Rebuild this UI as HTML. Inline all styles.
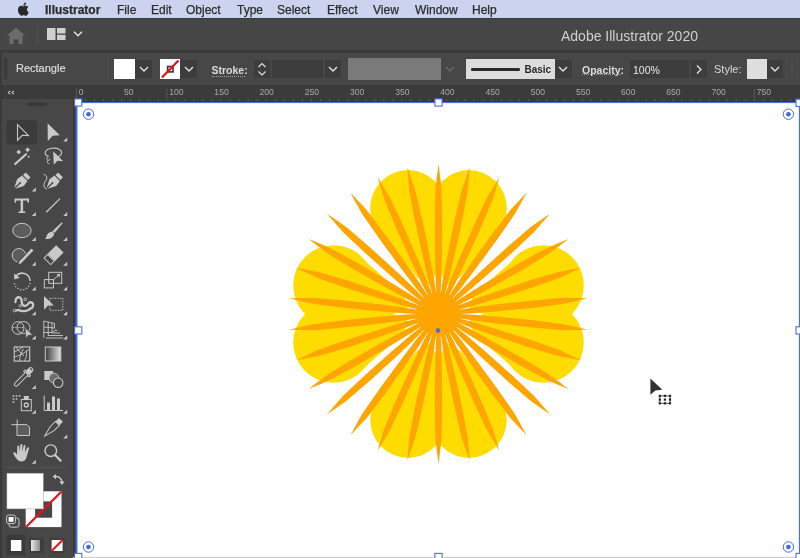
<!DOCTYPE html>
<html><head><meta charset="utf-8">
<style>
*{margin:0;padding:0;box-sizing:border-box}
html,body{width:800px;height:558px;overflow:hidden;will-change:transform;background:#3a3a3a;font-family:"Liberation Sans",sans-serif}
.a{position:absolute}
#menubar{left:0;top:0;width:800px;height:18px;background:#ccd3ee}
.mi{position:absolute;top:2.7px;font-size:12px;color:#2c2c2c;-webkit-text-stroke:0.25px #2c2c2c;line-height:15px;white-space:nowrap}
#appbar{left:0;top:18px;width:800px;height:32px;background:#464646;border-top:1px solid #383838}
#band{left:0;top:50px;width:800px;height:3px;background:#3c3c3c}
#ctrl{left:0;top:53px;width:800px;height:32px;background:#474747}
#ruler{left:0;top:85px;width:800px;height:16px;background:#3b3b3b}
#tools{left:0;top:99px;width:73px;height:459px;background:#474747}
#canvas{left:73px;top:101px;width:727px;height:457px;background:#393939}
#artboard{left:77px;top:103px;width:722px;height:454px;background:#fff}
.t{position:absolute;white-space:nowrap;line-height:12px}
.dd{position:absolute;background:#3d3d3d}
svg{position:absolute;left:0;top:0}
</style></head><body>
<div id="menubar" class="a">
 <span class="mi" style="left:45px;font-weight:bold">Illustrator</span>
 <span class="mi" style="left:117px">File</span>
 <span class="mi" style="left:151px">Edit</span>
 <span class="mi" style="left:186px">Object</span>
 <span class="mi" style="left:237px">Type</span>
 <span class="mi" style="left:277px">Select</span>
 <span class="mi" style="left:327px">Effect</span>
 <span class="mi" style="left:373px">View</span>
 <span class="mi" style="left:415px">Window</span>
 <span class="mi" style="left:472px">Help</span>
</div>
<div id="appbar" class="a"></div>
<div id="band" class="a"></div>
<div id="ctrl" class="a"></div>
<div id="ruler" class="a"></div>
<div id="tools" class="a"></div>
<div class="a" style="left:0;top:53px;width:1.8px;height:505px;background:#3a3a3a"></div>
<div id="canvas" class="a"></div>
<div id="artboard" class="a"></div>

<!-- app bar title -->
<div class="t" style="left:561px;top:29px;font-size:14px;line-height:14px;color:#cfcfcf">Adobe Illustrator 2020</div>

<!-- control bar -->
<div class="t" style="left:16px;top:62.4px;font-size:11px;color:#dcdcdc;-webkit-text-stroke:0.2px #dcdcdc">Rectangle</div>
<div class="a" style="left:114px;top:59px;width:21px;height:20px;background:#fff"></div>
<div class="dd" style="left:135px;top:60px;width:17px;height:18px"></div>
<div class="a" style="left:160px;top:59px;width:20px;height:20px;background:#fff"></div>
<div class="dd" style="left:180px;top:60px;width:17px;height:18px"></div>
<div class="t" style="left:211.5px;top:63.5px;font-size:10.5px;font-weight:bold;color:#dcdcdc">Stroke:</div>
<div class="dd" style="left:254px;top:60px;width:16px;height:18px"></div>
<div class="dd" style="left:272px;top:60px;width:51px;height:18px"></div>
<div class="dd" style="left:325px;top:60px;width:16px;height:18px"></div>
<div class="a" style="left:348px;top:58px;width:93px;height:22px;background:#7a7a7a"></div>
<div class="a" style="left:466px;top:59px;width:89px;height:20px;background:#dcdcdc"></div>
<div class="t" style="left:524.5px;top:64px;font-size:10px;font-weight:bold;color:#2a2a2a">Basic</div>
<div class="dd" style="left:555px;top:60px;width:17px;height:18px"></div>
<div class="t" style="left:582px;top:63.5px;font-size:10.5px;font-weight:bold;color:#dcdcdc">Opacity:</div>
<div class="dd" style="left:630px;top:60px;width:59px;height:18px"></div>
<div class="t" style="left:633px;top:64px;font-size:10.5px;color:#e8e8e8">100%</div>
<div class="dd" style="left:691px;top:60px;width:16px;height:18px"></div>
<div class="t" style="left:714px;top:63px;font-size:11px;color:#d8d8d8">Style:</div>
<div class="a" style="left:747px;top:59px;width:20px;height:20px;background:#dededf"></div>
<div class="dd" style="left:767px;top:60px;width:16px;height:18px"></div>

<svg width="800" height="558" viewBox="0 0 800 558">

<!--FLOWER-->
<g fill="#ffdc00"><path d="M430.23,285.16 L416.35,276.66 L374.76,225.75 L445.79,205.38 L437.50,270.59 Z"/><circle cx="408.07" cy="207.88" r="37.8"/><path d="M446.77,285.16 L439.50,270.59 L431.21,205.38 L502.24,225.75 L460.65,276.66 Z"/><circle cx="468.93" cy="207.88" r="37.8"/><path d="M467.45,306.13 L476.15,292.37 L525.42,249.46 L546.13,325.69 L481.91,313.60 Z"/><circle cx="543.49" cy="285.47" r="40.3"/><path d="M467.45,321.87 L481.91,314.40 L546.13,302.31 L525.42,378.54 L476.15,335.63 Z"/><circle cx="543.49" cy="342.53" r="40.3"/><path d="M446.77,342.84 L460.65,351.34 L502.24,402.25 L431.21,422.62 L439.50,357.41 Z"/><circle cx="468.93" cy="420.12" r="37.8"/><path d="M430.23,342.84 L437.50,357.41 L445.79,422.62 L374.76,402.25 L416.35,351.34 Z"/><circle cx="408.07" cy="420.12" r="37.8"/><path d="M409.55,321.87 L400.85,335.63 L351.58,378.54 L330.87,302.31 L395.09,314.40 Z"/><circle cx="333.51" cy="342.53" r="40.3"/><path d="M409.55,306.13 L395.09,313.60 L330.87,325.69 L351.58,249.46 L400.85,292.37 Z"/><circle cx="333.51" cy="285.47" r="40.3"/></g>
<g fill="#ffa500"><path d="M437.70,314.00 L436.50,294.00 L435.60,279.00 L435.05,254.00 L434.80,219.00 L435.50,188.00 L436.90,176.50 L438.50,164.00 L440.10,176.50 L441.50,188.00 L442.20,219.00 L441.95,254.00 L441.40,279.00 L440.50,294.00 L439.30,314.00 Z"/><path d="M437.72,313.83 L440.70,294.02 L442.94,279.16 L447.60,254.59 L454.63,220.31 L461.76,190.13 L465.52,179.17 L469.69,167.28 L468.65,179.84 L467.63,191.38 L461.87,221.85 L454.35,256.03 L448.61,280.37 L444.61,294.85 L439.28,314.17 Z"/><path d="M437.77,313.67 L444.81,294.92 L450.09,280.85 L459.75,257.78 L473.76,225.71 L487.01,197.67 L492.96,187.74 L499.51,176.97 L495.89,189.04 L492.49,200.11 L480.52,228.72 L466.06,260.59 L455.39,283.21 L448.46,296.54 L439.23,314.33 Z"/><path d="M437.85,313.53 L448.64,296.64 L456.73,283.98 L470.98,263.43 L491.35,234.97 L510.13,210.30 L518.03,201.82 L526.67,192.65 L520.61,203.70 L514.99,213.83 L497.33,239.32 L476.56,267.49 L461.42,287.39 L451.87,299.00 L439.15,314.47 Z"/><path d="M437.96,313.41 L452.02,299.13 L462.57,288.43 L480.78,271.29 L506.62,247.68 L530.13,227.46 L539.61,220.81 L549.97,213.63 L541.75,223.18 L534.14,231.92 L511.57,253.18 L485.40,276.42 L466.45,292.74 L454.70,302.10 L439.04,314.59 Z"/><path d="M438.10,313.31 L454.82,302.27 L467.36,293.99 L488.74,281.01 L518.92,263.30 L546.12,248.40 L556.78,243.86 L568.40,239.00 L558.38,246.64 L549.12,253.60 L522.62,269.70 L492.19,286.99 L470.26,299.01 L456.82,305.73 L438.90,314.69 Z"/><path d="M438.25,313.24 L456.90,305.92 L470.89,300.43 L494.50,292.18 L527.71,281.12 L557.41,272.21 L568.78,269.99 L581.16,267.65 L569.76,273.03 L559.26,277.92 L529.99,288.16 L496.63,298.74 L472.68,305.94 L458.14,309.72 L438.75,314.76 Z"/><path d="M438.42,313.20 L458.18,309.92 L473.01,307.46 L497.81,304.30 L532.59,300.39 L563.50,297.85 L575.08,298.04 L587.68,298.32 L575.41,301.22 L564.12,303.81 L533.37,307.75 L498.53,311.16 L473.61,313.23 L458.60,313.90 L438.58,314.80 Z"/><path d="M438.58,313.20 L458.60,314.10 L473.61,314.77 L498.53,316.84 L533.37,320.25 L564.12,324.19 L575.41,326.78 L587.68,329.68 L575.08,329.96 L563.50,330.15 L532.59,327.61 L497.81,323.70 L473.01,320.54 L458.18,318.08 L438.42,314.80 Z"/><path d="M438.75,313.24 L458.14,318.28 L472.68,322.06 L496.63,329.26 L529.99,339.84 L559.26,350.08 L569.76,354.97 L581.16,360.35 L568.78,358.01 L557.41,355.79 L527.71,346.88 L494.50,335.82 L470.89,327.57 L456.90,322.08 L438.25,314.76 Z"/><path d="M438.90,313.31 L456.82,322.27 L470.26,328.99 L492.19,341.01 L522.62,358.30 L549.12,374.40 L558.38,381.36 L568.40,389.00 L556.78,384.14 L546.12,379.60 L518.92,364.70 L488.74,346.99 L467.36,334.01 L454.82,325.73 L438.10,314.69 Z"/><path d="M439.04,313.41 L454.70,325.90 L466.45,335.26 L485.40,351.58 L511.57,374.82 L534.14,396.08 L541.75,404.82 L549.97,414.37 L539.61,407.19 L530.13,400.54 L506.62,380.32 L480.78,356.71 L462.57,339.57 L452.02,328.87 L437.96,314.59 Z"/><path d="M439.15,313.53 L451.87,329.00 L461.42,340.61 L476.56,360.51 L497.33,388.68 L514.99,414.17 L520.61,424.30 L526.67,435.35 L518.03,426.18 L510.13,417.70 L491.35,393.03 L470.98,364.57 L456.73,344.02 L448.64,331.36 L437.85,314.47 Z"/><path d="M439.23,313.67 L448.46,331.46 L455.39,344.79 L466.06,367.41 L480.52,399.28 L492.49,427.89 L495.89,438.96 L499.51,451.03 L492.96,440.26 L487.01,430.33 L473.76,402.29 L459.75,370.22 L450.09,347.15 L444.81,333.08 L437.77,314.33 Z"/><path d="M439.28,313.83 L444.61,333.15 L448.61,347.63 L454.35,371.97 L461.87,406.15 L467.63,436.62 L468.65,448.16 L469.69,460.72 L465.52,448.83 L461.76,437.87 L454.63,407.69 L447.60,373.41 L442.94,348.84 L440.70,333.98 L437.72,314.17 Z"/><path d="M439.30,314.00 L440.50,334.00 L441.40,349.00 L441.95,374.00 L442.20,409.00 L441.50,440.00 L440.10,451.50 L438.50,464.00 L436.90,451.50 L435.50,440.00 L434.80,409.00 L435.05,374.00 L435.60,349.00 L436.50,334.00 L437.70,314.00 Z"/><path d="M439.28,314.17 L436.30,333.98 L434.06,348.84 L429.40,373.41 L422.37,407.69 L415.24,437.87 L411.48,448.83 L407.31,460.72 L408.35,448.16 L409.37,436.62 L415.13,406.15 L422.65,371.97 L428.39,347.63 L432.39,333.15 L437.72,313.83 Z"/><path d="M439.23,314.33 L432.19,333.08 L426.91,347.15 L417.25,370.22 L403.24,402.29 L389.99,430.33 L384.04,440.26 L377.49,451.03 L381.11,438.96 L384.51,427.89 L396.48,399.28 L410.94,367.41 L421.61,344.79 L428.54,331.46 L437.77,313.67 Z"/><path d="M439.15,314.47 L428.36,331.36 L420.27,344.02 L406.02,364.57 L385.65,393.03 L366.87,417.70 L358.97,426.18 L350.33,435.35 L356.39,424.30 L362.01,414.17 L379.67,388.68 L400.44,360.51 L415.58,340.61 L425.13,329.00 L437.85,313.53 Z"/><path d="M439.04,314.59 L424.98,328.87 L414.43,339.57 L396.22,356.71 L370.38,380.32 L346.87,400.54 L337.39,407.19 L327.03,414.37 L335.25,404.82 L342.86,396.08 L365.43,374.82 L391.60,351.58 L410.55,335.26 L422.30,325.90 L437.96,313.41 Z"/><path d="M438.90,314.69 L422.18,325.73 L409.64,334.01 L388.26,346.99 L358.08,364.70 L330.88,379.60 L320.22,384.14 L308.60,389.00 L318.62,381.36 L327.88,374.40 L354.38,358.30 L384.81,341.01 L406.74,328.99 L420.18,322.27 L438.10,313.31 Z"/><path d="M438.75,314.76 L420.10,322.08 L406.11,327.57 L382.50,335.82 L349.29,346.88 L319.59,355.79 L308.22,358.01 L295.84,360.35 L307.24,354.97 L317.74,350.08 L347.01,339.84 L380.37,329.26 L404.32,322.06 L418.86,318.28 L438.25,313.24 Z"/><path d="M438.58,314.80 L418.82,318.08 L403.99,320.54 L379.19,323.70 L344.41,327.61 L313.50,330.15 L301.92,329.96 L289.32,329.68 L301.59,326.78 L312.88,324.19 L343.63,320.25 L378.47,316.84 L403.39,314.77 L418.40,314.10 L438.42,313.20 Z"/><path d="M438.42,314.80 L418.40,313.90 L403.39,313.23 L378.47,311.16 L343.63,307.75 L312.88,303.81 L301.59,301.22 L289.32,298.32 L301.92,298.04 L313.50,297.85 L344.41,300.39 L379.19,304.30 L403.99,307.46 L418.82,309.92 L438.58,313.20 Z"/><path d="M438.25,314.76 L418.86,309.72 L404.32,305.94 L380.37,298.74 L347.01,288.16 L317.74,277.92 L307.24,273.03 L295.84,267.65 L308.22,269.99 L319.59,272.21 L349.29,281.12 L382.50,292.18 L406.11,300.43 L420.10,305.92 L438.75,313.24 Z"/><path d="M438.10,314.69 L420.18,305.73 L406.74,299.01 L384.81,286.99 L354.38,269.70 L327.88,253.60 L318.62,246.64 L308.60,239.00 L320.22,243.86 L330.88,248.40 L358.08,263.30 L388.26,281.01 L409.64,293.99 L422.18,302.27 L438.90,313.31 Z"/><path d="M437.96,314.59 L422.30,302.10 L410.55,292.74 L391.60,276.42 L365.43,253.18 L342.86,231.92 L335.25,223.18 L327.03,213.63 L337.39,220.81 L346.87,227.46 L370.38,247.68 L396.22,271.29 L414.43,288.43 L424.98,299.13 L439.04,313.41 Z"/><path d="M437.85,314.47 L425.13,299.00 L415.58,287.39 L400.44,267.49 L379.67,239.32 L362.01,213.83 L356.39,203.70 L350.33,192.65 L358.97,201.82 L366.87,210.30 L385.65,234.97 L406.02,263.43 L420.27,283.98 L428.36,296.64 L439.15,313.53 Z"/><path d="M437.77,314.33 L428.54,296.54 L421.61,283.21 L410.94,260.59 L396.48,228.72 L384.51,200.11 L381.11,189.04 L377.49,176.97 L384.04,187.74 L389.99,197.67 L403.24,225.71 L417.25,257.78 L426.91,280.85 L432.19,294.92 L439.23,313.67 Z"/><path d="M437.72,314.17 L432.39,294.85 L428.39,280.37 L422.65,256.03 L415.13,221.85 L409.37,191.38 L408.35,179.84 L407.31,167.28 L411.48,179.17 L415.24,190.13 L422.37,220.31 L429.40,254.59 L434.06,279.16 L436.30,294.02 L439.28,313.83 Z"/><circle cx="438.5" cy="314.0" r="22"/></g>
<!--/FLOWER-->
<circle cx="438" cy="330.5" r="2.2" fill="#3b6fe0"/>
<!--CHROME-->
<path fill="#2a2a2a" transform="translate(1.6,0) scale(1.0)" d="M25.3,9.6c0-1.6,1.3-2.4,1.4-2.5c-0.8-1.1-2-1.3-2.4-1.3c-1-0.1-2,0.6-2.5,0.6c-0.5,0-1.3-0.6-2.2-0.6c-1.1,0-2.1,0.7-2.7,1.7c-1.2,2-0.3,5,0.8,6.6c0.6,0.8,1.2,1.7,2.1,1.7c0.8,0,1.2-0.5,2.2-0.5c1,0,1.3,0.5,2.2,0.5c0.9,0,1.5-0.8,2-1.6c0.6-0.9,0.9-1.8,0.9-1.9C27.1,12.3,25.3,11.6,25.3,9.6z M23.7,4.8c0.5-0.6,0.8-1.4,0.7-2.2c-0.7,0-1.5,0.5-2,1.1c-0.4,0.5-0.8,1.3-0.7,2.1C22.5,5.9,23.2,5.4,23.7,4.8z"/>
<path fill="#6b6b6b" d="M16,27.5 L25,35.5 L22.6,35.5 L22.6,44 L18.4,44 L18.4,39.5 L13.6,39.5 L13.6,44 L9.4,44 L9.4,35.5 L7,35.5 Z"/>
<line x1="37.5" y1="26" x2="37.5" y2="45" stroke="#5a5a5a" stroke-width="1" stroke-dasharray="1,1.5"/>
<rect x="47" y="28" width="8.5" height="12" fill="#cfcfcf"/><rect x="57" y="28" width="8.5" height="5.5" fill="#cfcfcf"/><rect x="57" y="34.8" width="8.5" height="5.2" fill="#cfcfcf"/>
<polyline points="74.0,31.8 78.0,35.8 82.0,31.8" fill="none" stroke="#e6e6e6" stroke-width="1.3"/>
<rect x="4" y="57.5" width="3.5" height="22" rx="1.5" fill="#3a3a3a"/>
<line x1="108" y1="57" x2="108" y2="81" stroke="#5a5a5a" stroke-dasharray="1,1.5"/>
<line x1="792" y1="57" x2="792" y2="81" stroke="#5a5a5a" stroke-dasharray="1,1.5"/>
<polyline points="140.0,67.0 144.0,71.0 148.0,67.0" fill="none" stroke="#e6e6e6" stroke-width="1.3"/>
<polyline points="185.0,67.0 189.0,71.0 193.0,67.0" fill="none" stroke="#e6e6e6" stroke-width="1.3"/>
<rect x="167.6" y="66.5" width="5.4" height="5.4" fill="none" stroke="#333" stroke-width="1.6"/>
<line x1="162" y1="77.5" x2="178.5" y2="60.5" stroke="#e8111a" stroke-width="2.2"/>
<line x1="212" y1="76.5" x2="246" y2="76.5" stroke="#9a9aa8" stroke-width="1" stroke-dasharray="1,1"/>
<polyline points="258.5,67 262,63.5 265.5,67" fill="none" stroke="#e0e0e0" stroke-width="1.2"/>
<polyline points="258.5,71.5 262,75 265.5,71.5" fill="none" stroke="#e0e0e0" stroke-width="1.2"/>
<polyline points="329.0,67.0 333.0,71.0 337.0,67.0" fill="none" stroke="#e6e6e6" stroke-width="1.3"/>
<polyline points="446.0,67.0 450.0,71.0 454.0,67.0" fill="none" stroke="#6a6a6a" stroke-width="1.3"/>
<rect x="471" y="68" width="49" height="3" rx="1.2" fill="#2a2a2a"/>
<polyline points="559.0,67.0 563.0,71.0 567.0,67.0" fill="none" stroke="#e6e6e6" stroke-width="1.3"/>
<line x1="582" y1="74.5" x2="622" y2="74.5" stroke="#9a9aa8" stroke-width="1" stroke-dasharray="1,1"/>
<polyline points="697,65.5 701,69.5 697,73.5" fill="none" stroke="#e6e6e6" stroke-width="1.3"/>
<polyline points="771.0,67.0 775.0,71.0 779.0,67.0" fill="none" stroke="#e6e6e6" stroke-width="1.3"/>
<polyline points="10.3,90.8 8.3,92.6 10.3,94.4" fill="none" stroke="#c0c0c0" stroke-width="1.1"/><polyline points="14,90.8 12,92.6 14,94.4" fill="none" stroke="#c0c0c0" stroke-width="1.1"/>
<line x1="76.50" y1="89" x2="76.50" y2="98" stroke="#5a5a5a" stroke-width="1"/>
<text x="78.80" y="95.3" font-size="8.6" fill="#a9a9a9" font-family="Liberation Sans">0</text>
<line x1="76.50" y1="99.5" x2="76.50" y2="101" stroke="#6a6a6a" stroke-width="1"/>
<line x1="85.54" y1="99.5" x2="85.54" y2="101" stroke="#6a6a6a" stroke-width="1"/>
<line x1="94.58" y1="99.5" x2="94.58" y2="101" stroke="#6a6a6a" stroke-width="1"/>
<line x1="103.61" y1="99.5" x2="103.61" y2="101" stroke="#6a6a6a" stroke-width="1"/>
<line x1="112.65" y1="99.5" x2="112.65" y2="101" stroke="#6a6a6a" stroke-width="1"/>
<text x="123.99" y="95.3" font-size="8.6" fill="#a9a9a9" font-family="Liberation Sans">50</text>
<line x1="121.69" y1="99.5" x2="121.69" y2="101" stroke="#6a6a6a" stroke-width="1"/>
<line x1="130.73" y1="99.5" x2="130.73" y2="101" stroke="#6a6a6a" stroke-width="1"/>
<line x1="139.77" y1="99.5" x2="139.77" y2="101" stroke="#6a6a6a" stroke-width="1"/>
<line x1="148.80" y1="99.5" x2="148.80" y2="101" stroke="#6a6a6a" stroke-width="1"/>
<line x1="157.84" y1="99.5" x2="157.84" y2="101" stroke="#6a6a6a" stroke-width="1"/>
<line x1="166.88" y1="89" x2="166.88" y2="98" stroke="#5a5a5a" stroke-width="1"/>
<text x="169.18" y="95.3" font-size="8.6" fill="#a9a9a9" font-family="Liberation Sans">100</text>
<line x1="166.88" y1="99.5" x2="166.88" y2="101" stroke="#6a6a6a" stroke-width="1"/>
<line x1="175.92" y1="99.5" x2="175.92" y2="101" stroke="#6a6a6a" stroke-width="1"/>
<line x1="184.96" y1="99.5" x2="184.96" y2="101" stroke="#6a6a6a" stroke-width="1"/>
<line x1="193.99" y1="99.5" x2="193.99" y2="101" stroke="#6a6a6a" stroke-width="1"/>
<line x1="203.03" y1="99.5" x2="203.03" y2="101" stroke="#6a6a6a" stroke-width="1"/>
<text x="214.37" y="95.3" font-size="8.6" fill="#a9a9a9" font-family="Liberation Sans">150</text>
<line x1="212.07" y1="99.5" x2="212.07" y2="101" stroke="#6a6a6a" stroke-width="1"/>
<line x1="221.11" y1="99.5" x2="221.11" y2="101" stroke="#6a6a6a" stroke-width="1"/>
<line x1="230.15" y1="99.5" x2="230.15" y2="101" stroke="#6a6a6a" stroke-width="1"/>
<line x1="239.18" y1="99.5" x2="239.18" y2="101" stroke="#6a6a6a" stroke-width="1"/>
<line x1="248.22" y1="99.5" x2="248.22" y2="101" stroke="#6a6a6a" stroke-width="1"/>
<text x="259.56" y="95.3" font-size="8.6" fill="#a9a9a9" font-family="Liberation Sans">200</text>
<line x1="257.26" y1="99.5" x2="257.26" y2="101" stroke="#6a6a6a" stroke-width="1"/>
<line x1="266.30" y1="99.5" x2="266.30" y2="101" stroke="#6a6a6a" stroke-width="1"/>
<line x1="275.34" y1="99.5" x2="275.34" y2="101" stroke="#6a6a6a" stroke-width="1"/>
<line x1="284.37" y1="99.5" x2="284.37" y2="101" stroke="#6a6a6a" stroke-width="1"/>
<line x1="293.41" y1="99.5" x2="293.41" y2="101" stroke="#6a6a6a" stroke-width="1"/>
<text x="304.75" y="95.3" font-size="8.6" fill="#a9a9a9" font-family="Liberation Sans">250</text>
<line x1="302.45" y1="99.5" x2="302.45" y2="101" stroke="#6a6a6a" stroke-width="1"/>
<line x1="311.49" y1="99.5" x2="311.49" y2="101" stroke="#6a6a6a" stroke-width="1"/>
<line x1="320.53" y1="99.5" x2="320.53" y2="101" stroke="#6a6a6a" stroke-width="1"/>
<line x1="329.56" y1="99.5" x2="329.56" y2="101" stroke="#6a6a6a" stroke-width="1"/>
<line x1="338.60" y1="99.5" x2="338.60" y2="101" stroke="#6a6a6a" stroke-width="1"/>
<text x="349.94" y="95.3" font-size="8.6" fill="#a9a9a9" font-family="Liberation Sans">300</text>
<line x1="347.64" y1="99.5" x2="347.64" y2="101" stroke="#6a6a6a" stroke-width="1"/>
<line x1="356.68" y1="99.5" x2="356.68" y2="101" stroke="#6a6a6a" stroke-width="1"/>
<line x1="365.72" y1="99.5" x2="365.72" y2="101" stroke="#6a6a6a" stroke-width="1"/>
<line x1="374.75" y1="99.5" x2="374.75" y2="101" stroke="#6a6a6a" stroke-width="1"/>
<line x1="383.79" y1="99.5" x2="383.79" y2="101" stroke="#6a6a6a" stroke-width="1"/>
<text x="395.13" y="95.3" font-size="8.6" fill="#a9a9a9" font-family="Liberation Sans">350</text>
<line x1="392.83" y1="99.5" x2="392.83" y2="101" stroke="#6a6a6a" stroke-width="1"/>
<line x1="401.87" y1="99.5" x2="401.87" y2="101" stroke="#6a6a6a" stroke-width="1"/>
<line x1="410.91" y1="99.5" x2="410.91" y2="101" stroke="#6a6a6a" stroke-width="1"/>
<line x1="419.94" y1="99.5" x2="419.94" y2="101" stroke="#6a6a6a" stroke-width="1"/>
<line x1="428.98" y1="99.5" x2="428.98" y2="101" stroke="#6a6a6a" stroke-width="1"/>
<text x="440.32" y="95.3" font-size="8.6" fill="#a9a9a9" font-family="Liberation Sans">400</text>
<line x1="438.02" y1="99.5" x2="438.02" y2="101" stroke="#6a6a6a" stroke-width="1"/>
<line x1="447.06" y1="99.5" x2="447.06" y2="101" stroke="#6a6a6a" stroke-width="1"/>
<line x1="456.10" y1="99.5" x2="456.10" y2="101" stroke="#6a6a6a" stroke-width="1"/>
<line x1="465.13" y1="99.5" x2="465.13" y2="101" stroke="#6a6a6a" stroke-width="1"/>
<line x1="474.17" y1="99.5" x2="474.17" y2="101" stroke="#6a6a6a" stroke-width="1"/>
<text x="485.51" y="95.3" font-size="8.6" fill="#a9a9a9" font-family="Liberation Sans">450</text>
<line x1="483.21" y1="99.5" x2="483.21" y2="101" stroke="#6a6a6a" stroke-width="1"/>
<line x1="492.25" y1="99.5" x2="492.25" y2="101" stroke="#6a6a6a" stroke-width="1"/>
<line x1="501.29" y1="99.5" x2="501.29" y2="101" stroke="#6a6a6a" stroke-width="1"/>
<line x1="510.32" y1="99.5" x2="510.32" y2="101" stroke="#6a6a6a" stroke-width="1"/>
<line x1="519.36" y1="99.5" x2="519.36" y2="101" stroke="#6a6a6a" stroke-width="1"/>
<text x="530.70" y="95.3" font-size="8.6" fill="#a9a9a9" font-family="Liberation Sans">500</text>
<line x1="528.40" y1="99.5" x2="528.40" y2="101" stroke="#6a6a6a" stroke-width="1"/>
<line x1="537.44" y1="99.5" x2="537.44" y2="101" stroke="#6a6a6a" stroke-width="1"/>
<line x1="546.48" y1="99.5" x2="546.48" y2="101" stroke="#6a6a6a" stroke-width="1"/>
<line x1="555.51" y1="99.5" x2="555.51" y2="101" stroke="#6a6a6a" stroke-width="1"/>
<line x1="564.55" y1="99.5" x2="564.55" y2="101" stroke="#6a6a6a" stroke-width="1"/>
<text x="575.89" y="95.3" font-size="8.6" fill="#a9a9a9" font-family="Liberation Sans">550</text>
<line x1="573.59" y1="99.5" x2="573.59" y2="101" stroke="#6a6a6a" stroke-width="1"/>
<line x1="582.63" y1="99.5" x2="582.63" y2="101" stroke="#6a6a6a" stroke-width="1"/>
<line x1="591.67" y1="99.5" x2="591.67" y2="101" stroke="#6a6a6a" stroke-width="1"/>
<line x1="600.70" y1="99.5" x2="600.70" y2="101" stroke="#6a6a6a" stroke-width="1"/>
<line x1="609.74" y1="99.5" x2="609.74" y2="101" stroke="#6a6a6a" stroke-width="1"/>
<text x="621.08" y="95.3" font-size="8.6" fill="#a9a9a9" font-family="Liberation Sans">600</text>
<line x1="618.78" y1="99.5" x2="618.78" y2="101" stroke="#6a6a6a" stroke-width="1"/>
<line x1="627.82" y1="99.5" x2="627.82" y2="101" stroke="#6a6a6a" stroke-width="1"/>
<line x1="636.86" y1="99.5" x2="636.86" y2="101" stroke="#6a6a6a" stroke-width="1"/>
<line x1="645.89" y1="99.5" x2="645.89" y2="101" stroke="#6a6a6a" stroke-width="1"/>
<line x1="654.93" y1="99.5" x2="654.93" y2="101" stroke="#6a6a6a" stroke-width="1"/>
<text x="666.27" y="95.3" font-size="8.6" fill="#a9a9a9" font-family="Liberation Sans">650</text>
<line x1="663.97" y1="99.5" x2="663.97" y2="101" stroke="#6a6a6a" stroke-width="1"/>
<line x1="673.01" y1="99.5" x2="673.01" y2="101" stroke="#6a6a6a" stroke-width="1"/>
<line x1="682.05" y1="99.5" x2="682.05" y2="101" stroke="#6a6a6a" stroke-width="1"/>
<line x1="691.08" y1="99.5" x2="691.08" y2="101" stroke="#6a6a6a" stroke-width="1"/>
<line x1="700.12" y1="99.5" x2="700.12" y2="101" stroke="#6a6a6a" stroke-width="1"/>
<text x="711.46" y="95.3" font-size="8.6" fill="#a9a9a9" font-family="Liberation Sans">700</text>
<line x1="709.16" y1="99.5" x2="709.16" y2="101" stroke="#6a6a6a" stroke-width="1"/>
<line x1="718.20" y1="99.5" x2="718.20" y2="101" stroke="#6a6a6a" stroke-width="1"/>
<line x1="727.24" y1="99.5" x2="727.24" y2="101" stroke="#6a6a6a" stroke-width="1"/>
<line x1="736.27" y1="99.5" x2="736.27" y2="101" stroke="#6a6a6a" stroke-width="1"/>
<line x1="745.31" y1="99.5" x2="745.31" y2="101" stroke="#6a6a6a" stroke-width="1"/>
<line x1="754.35" y1="89" x2="754.35" y2="98" stroke="#5a5a5a" stroke-width="1"/>
<text x="756.65" y="95.3" font-size="8.6" fill="#a9a9a9" font-family="Liberation Sans">750</text>
<line x1="754.35" y1="99.5" x2="754.35" y2="101" stroke="#6a6a6a" stroke-width="1"/>
<line x1="763.39" y1="99.5" x2="763.39" y2="101" stroke="#6a6a6a" stroke-width="1"/>
<line x1="772.43" y1="99.5" x2="772.43" y2="101" stroke="#6a6a6a" stroke-width="1"/>
<line x1="781.46" y1="99.5" x2="781.46" y2="101" stroke="#6a6a6a" stroke-width="1"/>
<line x1="790.50" y1="99.5" x2="790.50" y2="101" stroke="#6a6a6a" stroke-width="1"/>
<rect x="26.5" y="102.5" width="20.5" height="3.5" rx="1.7" fill="#393939"/>
<!--/CHROME-->
<!--TOOLS-->
<rect x="6.5" y="120" width="30.5" height="24.5" rx="2" fill="#3b3b3b"/>
<path d="M17.5,124.5 L17.5,140.3 L22.2,135.3 L28.5,135.6 Z" fill="none" stroke="#c9c9c9" stroke-width="1.1" stroke-linejoin="miter"/>
<path d="M47.6,123.2 L47.8,141 L52.7,135.8 L59.8,135.3 Z" fill="#c9c9c9"/>
<path d="M31.8,191.4 L35.8,187.4 L35.8,191.4 Z" fill="#c9c9c9"/>
<path d="M31.8,216.0 L35.8,212.0 L35.8,216.0 Z" fill="#c9c9c9"/>
<path d="M31.8,241.1 L35.8,237.1 L35.8,241.1 Z" fill="#c9c9c9"/>
<path d="M31.8,265.8 L35.8,261.8 L35.8,265.8 Z" fill="#c9c9c9"/>
<path d="M31.8,290.6 L35.8,286.6 L35.8,290.6 Z" fill="#c9c9c9"/>
<path d="M31.8,315.2 L35.8,311.2 L35.8,315.2 Z" fill="#c9c9c9"/>
<path d="M31.8,339.6 L35.8,335.6 L35.8,339.6 Z" fill="#c9c9c9"/>
<path d="M31.8,389.1 L35.8,385.1 L35.8,389.1 Z" fill="#c9c9c9"/>
<path d="M31.8,413.8 L35.8,409.8 L35.8,413.8 Z" fill="#c9c9c9"/>
<path d="M31.8,463.7 L35.8,459.7 L35.8,463.7 Z" fill="#c9c9c9"/>
<path d="M63.2,141.6 L67.2,137.6 L67.2,141.6 Z" fill="#c9c9c9"/>
<path d="M63.2,216.0 L67.2,212.0 L67.2,216.0 Z" fill="#c9c9c9"/>
<path d="M63.2,241.1 L67.2,237.1 L67.2,241.1 Z" fill="#c9c9c9"/>
<path d="M63.2,265.8 L67.2,261.8 L67.2,265.8 Z" fill="#c9c9c9"/>
<path d="M63.2,290.6 L67.2,286.6 L67.2,290.6 Z" fill="#c9c9c9"/>
<path d="M63.2,315.2 L67.2,311.2 L67.2,315.2 Z" fill="#c9c9c9"/>
<path d="M63.2,339.6 L67.2,335.6 L67.2,339.6 Z" fill="#c9c9c9"/>
<path d="M63.2,413.8 L67.2,409.8 L67.2,413.8 Z" fill="#c9c9c9"/>
<path d="M63.2,438.6 L67.2,434.6 L67.2,438.6 Z" fill="#c9c9c9"/>
<line x1="15.2" y1="164" x2="26" y2="154.3" stroke="#c9c9c9" stroke-width="2.2" stroke-linecap="round"/>
<path d="M18.7,149.4 Q19.61,151.09 21.3,152 Q19.61,152.91 18.7,154.6 Q17.79,152.91 16.099999999999998,152 Q17.79,151.09 18.7,149.4 Z" fill="#c9c9c9"/>
<path d="M27.6,147.20000000000002 Q28.51,148.89000000000001 30.200000000000003,149.8 Q28.51,150.71 27.6,152.4 Q26.69,150.71 25.0,149.8 Q26.69,148.89000000000001 27.6,147.20000000000002 Z" fill="#c9c9c9"/>
<circle cx="28.6" cy="156.8" r="1" fill="#c9c9c9"/>
<path d="M56,157.5 C62,156.5 63,151.5 59.5,149.5 C55.5,147 47.5,148 45.5,151.5 C44.3,153.8 46,155.8 48.5,156.2" fill="none" stroke="#c9c9c9" stroke-width="1.1"/>
<path d="M48.6,156.5 C46.3,157.3 46.2,159.7 48.2,160.2 C49.8,160.6 50.3,159 49.2,158.5 M48.2,160.2 C46.5,161.5 47.5,164 49.5,163.5" fill="none" stroke="#c9c9c9" stroke-width="1"/>
<path d="M53.2,151.2 L53.8,164.8 L57.4,160.8 L63.2,161.2 Z" fill="#c9c9c9"/>
<g transform="translate(21.2,181.8) rotate(45) scale(1.08)"><path d="M-3.2,-9 L3.2,-9 L3.2,-5.6 L-3.2,-5.6 Z M-3.6,-4.6 L3.6,-4.6 L4.4,1 L0.6,8.5 L0.6,2.2 A0.9,0.9 0 1 0 -0.6,2.2 L-0.6,8.5 L-4.4,1 Z" fill="#c9c9c9"/></g>
<g transform="translate(53.6,181.8) rotate(45) scale(1.08)"><path d="M-3.2,-9 L3.2,-9 L3.2,-5.6 L-3.2,-5.6 Z M-3.6,-4.6 L3.6,-4.6 L4.4,1 L0.6,8.5 L0.6,2.2 A0.9,0.9 0 1 0 -0.6,2.2 L-0.6,8.5 L-4.4,1 Z" fill="#c9c9c9"/></g>
<path d="M43.5,174.2 C47.5,175.5 47.5,178.5 45.5,181 C43,184 43.5,188.5 47,189" fill="none" stroke="#c9c9c9" stroke-width="1"/>
<path d="M14.6,198.6 L29,198.6 L29,202.8 L27.8,202.8 L27.2,200.6 L23.1,200.6 L23.1,211.4 L25.3,211.6 L25.3,213 L18.4,213 L18.4,211.6 L20.6,211.4 L20.6,200.6 L16.4,200.6 L15.8,202.8 L14.6,202.8 Z" fill="#c9c9c9"/>
<line x1="46.2" y1="212.2" x2="60" y2="198.6" stroke="#c9c9c9" stroke-width="1.3"/>
<ellipse cx="21.9" cy="230.5" rx="9.2" ry="7.2" fill="#5d5d5d" stroke="#c9c9c9" stroke-width="1"/>
<path d="M61.8,222.2 L62.6,223.3 L54.5,233 L52.4,231.2 Z" fill="#c9c9c9"/>
<path d="M52,231.6 L54.2,233.5 C53.5,237.5 50,239.5 45,239 C47,237.5 46.5,233.5 49.5,232.5 Z" fill="#c9c9c9"/>
<path d="M25.5,253.5 A6.8,6.8 0 1 0 17.5,262" fill="#5d5d5d" stroke="#c9c9c9" stroke-width="1"/>
<path d="M31.5,248.6 L33.4,250.4 L21.2,263.3 L18.6,264.5 L19.3,261.6 Z" fill="#c9c9c9"/>
<g transform="translate(53.5,255.2) rotate(45)"><rect x="-5.2" y="-9" width="10.4" height="12.2" fill="#c9c9c9"/><rect x="-4.7" y="3.6" width="9.4" height="5" fill="none" stroke="#c9c9c9" stroke-width="1"/></g>
<path d="M16,276 A8,8 0 0 1 30,280" fill="none" stroke="#c9c9c9" stroke-width="1.5"/>
<path d="M14,273.5 L14.3,279.5 L19.8,277.8 Z" fill="#c9c9c9"/>
<path d="M30,280 A8,8 0 1 1 14.2,282" fill="none" stroke="#c9c9c9" stroke-width="1.3" stroke-dasharray="1.2,1.8"/>
<rect x="48.7" y="272.3" width="13" height="11" fill="none" stroke="#c9c9c9" stroke-width="1"/>
<rect x="44.3" y="279.6" width="9.2" height="8.3" fill="none" stroke="#c9c9c9" stroke-width="1"/>
<line x1="53" y1="280" x2="59.5" y2="274.5" stroke="#c9c9c9" stroke-width="1"/><path d="M60.2,273.8 L56.5,274.6 L59.5,277.4 Z" fill="#c9c9c9"/>
<path d="M15.5,302 C15,298.5 17.5,296.5 20,297.5 C22,298.5 21.5,301.5 22,303.5 C22.8,306.5 26.5,306.5 28,304 C29,302 31.5,301.5 32.8,303.5 C33.8,305.5 32.5,308.5 30.5,308.5 C28,311.5 22,312 18.5,310 L14.8,310.8" fill="none" stroke="#c9c9c9" stroke-width="2.3" stroke-linecap="round"/>
<circle cx="25.2" cy="299.3" r="1.3" fill="#474747" stroke="#c9c9c9" stroke-width="0.9"/><circle cx="14.5" cy="310.6" r="1.3" fill="#474747" stroke="#c9c9c9" stroke-width="0.9"/><circle cx="20.2" cy="305.8" r="1.2" fill="#474747" stroke="#c9c9c9" stroke-width="0.8"/>
<rect x="49.8" y="298.3" width="13" height="12" fill="none" stroke="#c9c9c9" stroke-width="1" stroke-dasharray="1.3,1.3"/>
<path d="M44,296 L44,309.8 L48,305.5 L53.8,305.5 Z" fill="#c9c9c9"/>
<ellipse cx="18" cy="328" rx="6" ry="6.3" fill="none" stroke="#c9c9c9" stroke-width="1"/><ellipse cx="23.5" cy="327.5" rx="6.5" ry="6" fill="none" stroke="#c9c9c9" stroke-width="1"/>
<line x1="13" y1="327.5" x2="24" y2="327.5" stroke="#c9c9c9" stroke-width="0.9" stroke-dasharray="1,0.8"/>
<path d="M25,327.8 L26,338.3 L28.3,335.2 L32.8,335 Z" fill="#c9c9c9" stroke="#474747" stroke-width="0.6"/>
<path d="M43.8,321 L43.8,338 M43.8,321 L54.5,323.5 M43.8,327 L54.5,328 M43.8,332.5 L52,332.5 M48.2,322 L48.2,335.5 M52,323 L52,332.5 M54.5,323.5 L54.5,328.5 M52,332.5 L56,330 M48,335.5 L63,335.5 M46,338 L63,338 M55.5,330.5 L57.5,330.5 M52,333 L60,333" fill="none" stroke="#c9c9c9" stroke-width="0.9"/>
<rect x="14.2" y="346.9" width="15.5" height="14.2" fill="none" stroke="#c9c9c9" stroke-width="1.1"/>
<path d="M14.2,352 C18,350.5 21,348.5 23,346.9 M14.2,357 C19,356 24,353 29.7,349 M19.5,361 C20,356 21,352 23.5,349 M24.5,361 C26,358 27,355 26.5,350.5 M16,346.9 C18,350 20.5,353 24,356" fill="none" stroke="#c9c9c9" stroke-width="0.9"/>
<defs><linearGradient id="gr" x1="0" x2="1" y1="0" y2="0"><stop offset="0" stop-color="#3a3a3a"/><stop offset="1" stop-color="#e4e4e4"/></linearGradient><linearGradient id="gr2" x1="0" x2="1" y1="0" y2="0"><stop offset="0" stop-color="#e8e8e8"/><stop offset="1" stop-color="#8a8a8a"/></linearGradient></defs>
<rect x="45.3" y="347" width="15.5" height="14" fill="url(#gr)" stroke="#c9c9c9" stroke-width="1"/>
<g transform="translate(22.5,378) rotate(45)"><path d="M-2.2,-11.5 A2.2,2.2 0 0 1 2.2,-11.5 L2.2,-7.5 L3.8,-7.5 L3.8,-5.5 L1.8,-5.5 L1.8,9 A1.8,1.8 0 0 1 -1.8,9 L-1.8,-5.5 L-3.8,-5.5 L-3.8,-7.5 L-2.2,-7.5 Z" fill="none" stroke="#c9c9c9" stroke-width="1"/><rect x="-2.2" y="-11.8" width="4.4" height="6" fill="#c9c9c9"/></g>
<rect x="44.3" y="371" width="8.8" height="9" fill="#c9c9c9"/>
<circle cx="54" cy="378.2" r="5" fill="#6e6e6e" stroke="#c9c9c9" stroke-width="0.8"/>
<circle cx="58.2" cy="382.7" r="4.7" fill="#474747" stroke="#c9c9c9" stroke-width="1.1"/>
<rect x="12.7" y="395.2" width="1.6" height="1.6" fill="#c9c9c9"/>
<rect x="15.7" y="395.2" width="1.6" height="1.6" fill="#c9c9c9"/>
<rect x="18.7" y="395.2" width="1.6" height="1.6" fill="#c9c9c9"/>
<rect x="12.7" y="398.2" width="1.6" height="1.6" fill="#c9c9c9"/>
<rect x="15.7" y="398.2" width="1.6" height="1.6" fill="#c9c9c9"/>
<rect x="12.7" y="401.2" width="1.6" height="1.6" fill="#c9c9c9"/>
<rect x="21.3" y="399.5" width="10" height="11.2" fill="none" stroke="#c9c9c9" stroke-width="1"/><rect x="23.8" y="396" width="5" height="3" fill="#c9c9c9"/><circle cx="26.3" cy="405" r="2" fill="none" stroke="#c9c9c9" stroke-width="1.3"/>
<path d="M44.2,395.5 L44.2,410.5 L63,410.5" fill="none" stroke="#c9c9c9" stroke-width="1"/>
<rect x="47" y="402.5" width="3" height="8" fill="#c9c9c9"/><rect x="52" y="396.5" width="3" height="14" fill="#c9c9c9"/><rect x="57" y="398.5" width="3" height="12" fill="#c9c9c9"/>
<line x1="17.2" y1="419.5" x2="17.2" y2="427" stroke="#c9c9c9" stroke-width="1"/><line x1="11.3" y1="424.7" x2="19" y2="424.7" stroke="#c9c9c9" stroke-width="1"/>
<path d="M17,424.6 L27,424.6 L29.5,427.2 L29.5,435.5 L17,435.5 Z" fill="#5d5d5d" stroke="#c9c9c9" stroke-width="1"/>
<g transform="translate(52.8,428) rotate(45)"><rect x="-2.8" y="-11.5" width="5.6" height="5" fill="#c9c9c9"/><path d="M-2.8,-6.5 L2.8,-6.5 L2.8,1 L0,11.5 L-2.8,1 Z" fill="none" stroke="#c9c9c9" stroke-width="1"/></g>
<path d="M17.3,459.5 C15,457 13,454 13.5,452.5 C14.2,451.5 15.5,452.5 17,454.5 L17.3,446.5 C17.4,445.2 19.3,445.2 19.3,446.5 L19.5,452 L20.4,444.8 C20.6,443.6 22.4,443.6 22.4,444.8 L22.3,452 L23.6,445.8 C23.9,444.6 25.6,444.8 25.5,446 L24.8,452.5 L27.2,447.8 C27.7,446.8 29.3,447.2 29,448.4 L26.6,457 C25.8,460 23.8,461.5 21.5,461.5 C19.5,461.5 18.3,460.6 17.3,459.5 Z" fill="#c9c9c9"/>
<circle cx="50.8" cy="450.7" r="5.8" fill="none" stroke="#c9c9c9" stroke-width="1.4"/><line x1="55" y1="455" x2="60.6" y2="460.6" stroke="#c9c9c9" stroke-width="2.2" stroke-linecap="round"/>
<line x1="5" y1="467.5" x2="68" y2="467.5" stroke="#5c5c5c" stroke-width="1" stroke-dasharray="1.2,1.3"/>
<rect x="25.7" y="491.3" width="35.8" height="35.8" fill="#fff"/>
<rect x="35.1" y="501.4" width="17" height="16.3" fill="#474747"/>
<line x1="26" y1="527" x2="61.3" y2="491.8" stroke="#e8141c" stroke-width="2.2"/>
<rect x="6.9" y="473.2" width="36.4" height="35.7" fill="#fff" stroke="#9a9a9a" stroke-width="0.5"/>
<path d="M54.5,476.5 C58.5,476 61.5,478 62,482" fill="none" stroke="#c9c9c9" stroke-width="1.5"/><path d="M52.6,476.6 L56,474 L56,479.2 Z M59.2,481.5 L64.6,481.5 L62,485 Z" fill="#c9c9c9"/>
<rect x="9" y="518" width="10" height="9.2" rx="2.3" fill="#474747" stroke="#c9c9c9" stroke-width="1"/><rect x="6.5" y="515" width="9" height="8.6" rx="2.3" fill="#474747" stroke="#c9c9c9" stroke-width="1"/><rect x="8.6" y="517" width="5" height="4.8" fill="#fff"/>
<rect x="6.6" y="534.8" width="18.7" height="20.7" fill="#3a3a3a"/>
<rect x="10.9" y="540" width="10.5" height="11" fill="#fff"/>
<rect x="29" y="538" width="15" height="15" fill="#3e3e3e"/>
<rect x="31" y="540" width="9" height="11" fill="url(#gr2)"/>
<line x1="46.4" y1="535" x2="46.4" y2="556" stroke="#5a5a5a" stroke-dasharray="1,1.5"/>
<rect x="50.6" y="538" width="14.1" height="15" fill="#3e3e3e"/>
<rect x="51.6" y="540" width="11" height="11" fill="#fff"/><line x1="51.6" y1="551" x2="62.6" y2="540" stroke="#e8141c" stroke-width="2"/>
<!--/TOOLS-->
<!--CANVAS-->
<rect x="75.6" y="102" width="724.4" height="1.1" fill="#4a6fe3"/><rect x="75.6" y="102" width="1.9" height="455" fill="#4a6fe3"/><rect x="798.9" y="102" width="1.1" height="455" fill="#4a6fe3"/>
<rect x="73" y="556.8" width="727" height="1.2" fill="#cfcfcf"/>
<rect x="74.6" y="98.9" width="7.2" height="7.2" fill="#fff" stroke="#4a6fe3" stroke-width="1.1"/>
<rect x="434.9" y="98.9" width="7.2" height="7.2" fill="#fff" stroke="#4a6fe3" stroke-width="1.1"/>
<rect x="796.0" y="99.2" width="7.2" height="7.2" fill="#fff" stroke="#4a6fe3" stroke-width="1.1"/>
<rect x="74.6" y="326.8" width="7.2" height="7.2" fill="#fff" stroke="#4a6fe3" stroke-width="1.1"/>
<rect x="796.0" y="326.8" width="7.2" height="7.2" fill="#fff" stroke="#4a6fe3" stroke-width="1.1"/>
<rect x="74.6" y="553.4" width="7.2" height="7.2" fill="#fff" stroke="#4a6fe3" stroke-width="1.1"/>
<rect x="434.9" y="553.4" width="7.2" height="7.2" fill="#fff" stroke="#4a6fe3" stroke-width="1.1"/>
<rect x="796.0" y="553.4" width="7.2" height="7.2" fill="#fff" stroke="#4a6fe3" stroke-width="1.1"/>
<circle cx="88.5" cy="114.2" r="5.2" fill="none" stroke="#4a6fe3" stroke-width="1"/><circle cx="88.5" cy="114.2" r="2.3" fill="#3a66f0"/>
<circle cx="788.4" cy="114.2" r="5.2" fill="none" stroke="#4a6fe3" stroke-width="1"/><circle cx="788.4" cy="114.2" r="2.3" fill="#3a66f0"/>
<circle cx="88.5" cy="547" r="5.2" fill="none" stroke="#4a6fe3" stroke-width="1"/><circle cx="88.5" cy="547" r="2.3" fill="#3a66f0"/>
<circle cx="788.4" cy="547" r="5.2" fill="none" stroke="#4a6fe3" stroke-width="1"/><circle cx="788.4" cy="547" r="2.3" fill="#3a66f0"/>
<path d="M650.4,378.6 L650.4,394.7 L655.4,390.4 L662.3,389.8 Z" fill="#333"/>
<rect x="659.8" y="395.9" width="10.2" height="7.4" fill="none" stroke="#333" stroke-width="0.8"/>
<rect x="658.7" y="394.8" width="2.2" height="2.2" fill="#222"/>
<rect x="663.8" y="394.8" width="2.2" height="2.2" fill="#222"/>
<rect x="668.9" y="394.8" width="2.2" height="2.2" fill="#222"/>
<rect x="658.7" y="398.5" width="2.2" height="2.2" fill="#222"/>
<rect x="668.9" y="398.5" width="2.2" height="2.2" fill="#222"/>
<rect x="658.7" y="402.2" width="2.2" height="2.2" fill="#222"/>
<rect x="663.8" y="402.2" width="2.2" height="2.2" fill="#222"/>
<rect x="668.9" y="402.2" width="2.2" height="2.2" fill="#222"/>
<rect x="663.8" y="398.5" width="2.2" height="2.2" fill="#222"/>
<!--/CANVAS-->
</svg>
</body></html>
